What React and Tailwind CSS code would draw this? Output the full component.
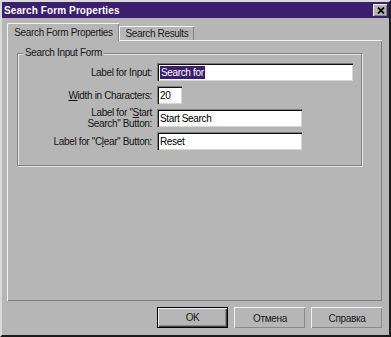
const face = { fontFamily: '"Liberation Sans", Arial, sans-serif' };

function Field({ width, children }) {
  return (
    <div
      className={`flex h-[18px] items-center bg-white pl-[2px] border-t border-l border-[#7c7c7c] border-r-white border-b-white shadow-[inset_1px_1px_0_#111,inset_-1px_-1px_0_#d6d6d6] ${width}`}
    >
      {children}
    </div>
  );
}

function Label({ children, tight }) {
  return (
    <div className={`text-right text-[#151515] ${tight ? '-my-[2px] leading-[11px]' : 'leading-[11px]'}`}>
      {children}
    </div>
  );
}

function Button({ children, primary }) {
  return (
    <button
      className={`flex h-[21px] w-[71px] items-center justify-center bg-[#b6b6b6] text-[#1a1a1a] ${
        primary
          ? 'border border-black shadow-[inset_1px_1px_0_#f2f2f2,inset_-1px_-1px_0_#444,inset_-2px_-2px_0_#8a8a8a]'
          : 'border-t border-l border-[#f2f2f2] border-r-[#111] border-b-[#111] shadow-[inset_-1px_-1px_0_#8a8a8a]'
      }`}
    >
      {children}
    </button>
  );
}

export default function App() {
  return (
    <div
      className="flex h-[337px] w-[391px] flex-col border-2 border-t-[#d9d9d9] border-l-[#d9d9d9] border-r-[#1c1c1c] border-b-[#1c1c1c] bg-[#b6b6b6] text-[10px] tracking-[-0.35px]"
      style={face}
    >
      <div className="flex h-[16px] items-center justify-between bg-[#3b1e6c] pl-[2px] pr-[2px]">
        <span className="text-[10px] font-bold tracking-[0.1px] text-white">Search Form Properties</span>
        <span className="flex h-[12px] w-[14px] items-center justify-center border-t border-l border-[#f0f0f0] border-r-[#111] border-b-[#111] bg-[#b6b6b6] shadow-[inset_-1px_-1px_0_#808080]">
          <svg width="8" height="7" viewBox="0 0 8 7">
            <path d="M1 0.5 L7 6.5 M7 0.5 L1 6.5" stroke="#000" strokeWidth="1.8" />
          </svg>
        </span>
      </div>

      <div className="mt-[5px] flex h-[17px] items-end pl-[5px]">
        <div className="relative z-10 -mb-[1px] flex h-[18px] w-[112px] items-center justify-center rounded-tl-[2px] border-t border-l border-[#f4f4f4] border-r-[#111] bg-[#b6b6b6] pb-[1px] shadow-[inset_-1px_0_0_#808080] text-[#1a1a1a]">
          Search Form Properties
        </div>
        <div className="flex h-[14px] w-[75px] items-center justify-center border-t border-l border-[#f4f4f4] border-r-[#111] shadow-[inset_-1px_0_0_#808080] text-[#1a1a1a]">
          Search Results
        </div>
      </div>

      <div className="ml-[5px] h-[261px] w-[375px] border-t border-l border-[#f4f4f4] border-r-[#111] border-b-[#111] shadow-[inset_-1px_-1px_0_#808080] pl-[9px] pt-[6px]">
        <fieldset className="w-[345px] border border-[#838383] pb-[15px] shadow-[1px_1px_0_#e6e6e6,inset_1px_1px_0_#e6e6e6]">
          <legend className="ml-[5px] bg-[#b6b6b6] px-[2px] leading-[12px] text-[#151515]">Search Input Form</legend>
          <div className="mt-[4px] grid grid-cols-[134px_auto] items-center gap-x-[5px] gap-y-[5px]">
            <Label>Label for Input:</Label>
            <Field width="w-[196px]">
              <span className="bg-[#3b1e6c] px-[1px] leading-[13px] text-white">Search for</span>
            </Field>

            <Label>
              <span className="underline">W</span>idth in Characters:
            </Label>
            <Field width="w-[25px]">20</Field>

            <Label tight>
              Label for "<span className="underline">S</span>tart
              <br />
              Search" Button:
            </Label>
            <Field width="w-[145px]">Start Search</Field>

            <Label>
              Label for "C<span className="underline">l</span>ear" Button:
            </Label>
            <Field width="w-[145px]">Reset</Field>
          </div>
        </fieldset>
      </div>

      <div className="mt-[6px] flex justify-end gap-[6px] pr-[7px]">
        <Button primary>OK</Button>
        <Button>Отмена</Button>
        <Button>Справка</Button>
      </div>
    </div>
  );
}
